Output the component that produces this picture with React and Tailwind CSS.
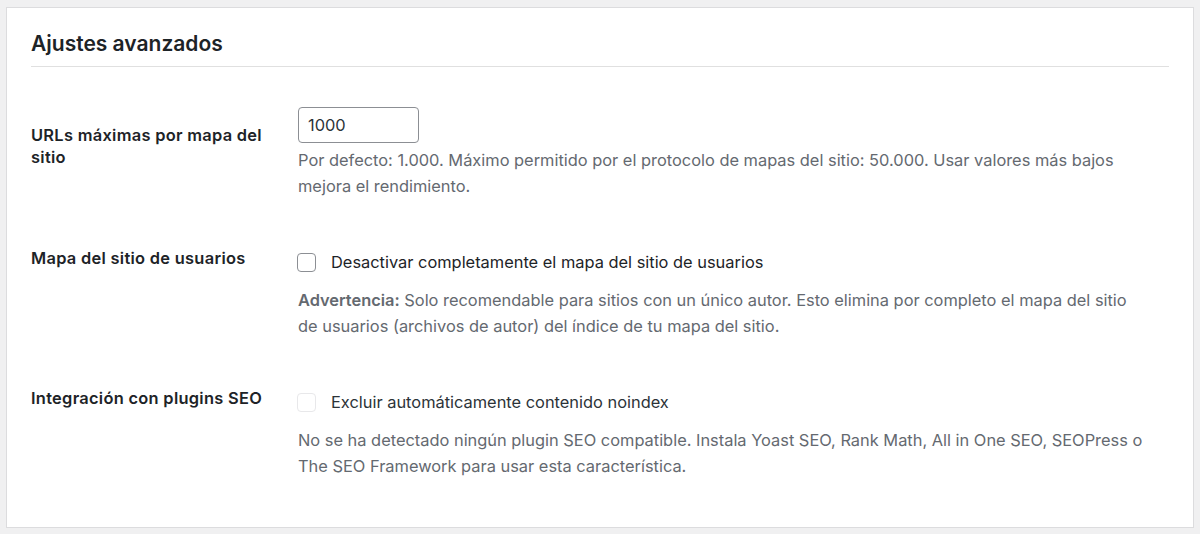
export default function App() {
  const font = { fontFamily: 'Inter, "Noto Sans", sans-serif' };
  return (
    <div className="w-[1200px] h-[534px] bg-[#f0f0f1] pt-[7px] pl-[6px] pr-[6px] overflow-hidden" style={font}>
      <div className="bg-white border border-[#dcdcde] h-[521px] px-6 pt-[22px]">
        <h2 className="text-[21px] leading-[28px] font-semibold text-[#1d2327] pb-2 border-b border-[#e0e0e0]">
          Ajustes avanzados
        </h2>

        {/* Row 1 */}
        <div className="flex mt-[40px]">
          <div className="w-[267px] shrink-0 pr-5 pt-[17px] text-[16.4px] leading-[22px] tracking-[0.3px] font-semibold text-[#1d2327]">
            URLs máximas por mapa del sitio
          </div>
          <div className="flex-1">
            <input
              type="text"
              defaultValue="1000"
              className="w-[121px] h-[36px] border border-[#8c8f94] rounded-[4px] px-[9px] text-[16.4px] text-[#2c3338] bg-white outline-none"
              style={font}
            />
            <p className="mt-1 text-[16.4px] leading-[26px] text-[#646970]">
              Por defecto: 1.000. Máximo permitido por el protocolo de mapas del sitio: 50.000. Usar valores más bajos
              <br />
              mejora el rendimiento.
            </p>
          </div>
        </div>

        {/* Row 2 */}
        <div className="flex mt-[51px]">
          <div className="w-[267px] shrink-0 pr-5 mt-[-3px] text-[16.4px] leading-[22px] tracking-[0.3px] font-semibold text-[#1d2327]">
            Mapa del sitio de usuarios
          </div>
          <div className="flex-1">
            <label className="flex items-center h-[24px] text-[16.4px] text-[#1d2327]">
              <span className="w-[19px] h-[19px] border border-[#8c8f94] rounded-[4px] bg-white mr-[15px] -ml-px shrink-0" />
              Desactivar completamente el mapa del sitio de usuarios
            </label>
            <p className="mt-[13px] text-[16.4px] leading-[26px] text-[#646970]">
              <span className="font-semibold">Advertencia:</span> Solo recomendable para sitios con un único autor. Esto elimina por completo el mapa del sitio
              <br />
              de usuarios (archivos de autor) del índice de tu mapa del sitio.
            </p>
          </div>
        </div>

        {/* Row 3 */}
        <div className="flex mt-[51px]">
          <div className="w-[267px] shrink-0 pr-5 mt-[-3px] text-[16.4px] leading-[22px] tracking-[0.3px] font-semibold text-[#1d2327]">
            Integración con plugins SEO
          </div>
          <div className="flex-1">
            <label className="flex items-center h-[24px] text-[16.4px] text-[#2c3338]">
              <span className="w-[19px] h-[19px] border border-[#e8e8ea] rounded-[4px] bg-white mr-[15px] -ml-px shrink-0" />
              Excluir automáticamente contenido noindex
            </label>
            <p className="mt-[13px] text-[16.4px] leading-[26px] text-[#646970]">
              No se ha detectado ningún plugin SEO compatible. Instala Yoast SEO, Rank Math, All in One SEO, SEOPress o
              <br />
              The SEO Framework para usar esta característica.
            </p>
          </div>
        </div>
      </div>
    </div>
  );
}
